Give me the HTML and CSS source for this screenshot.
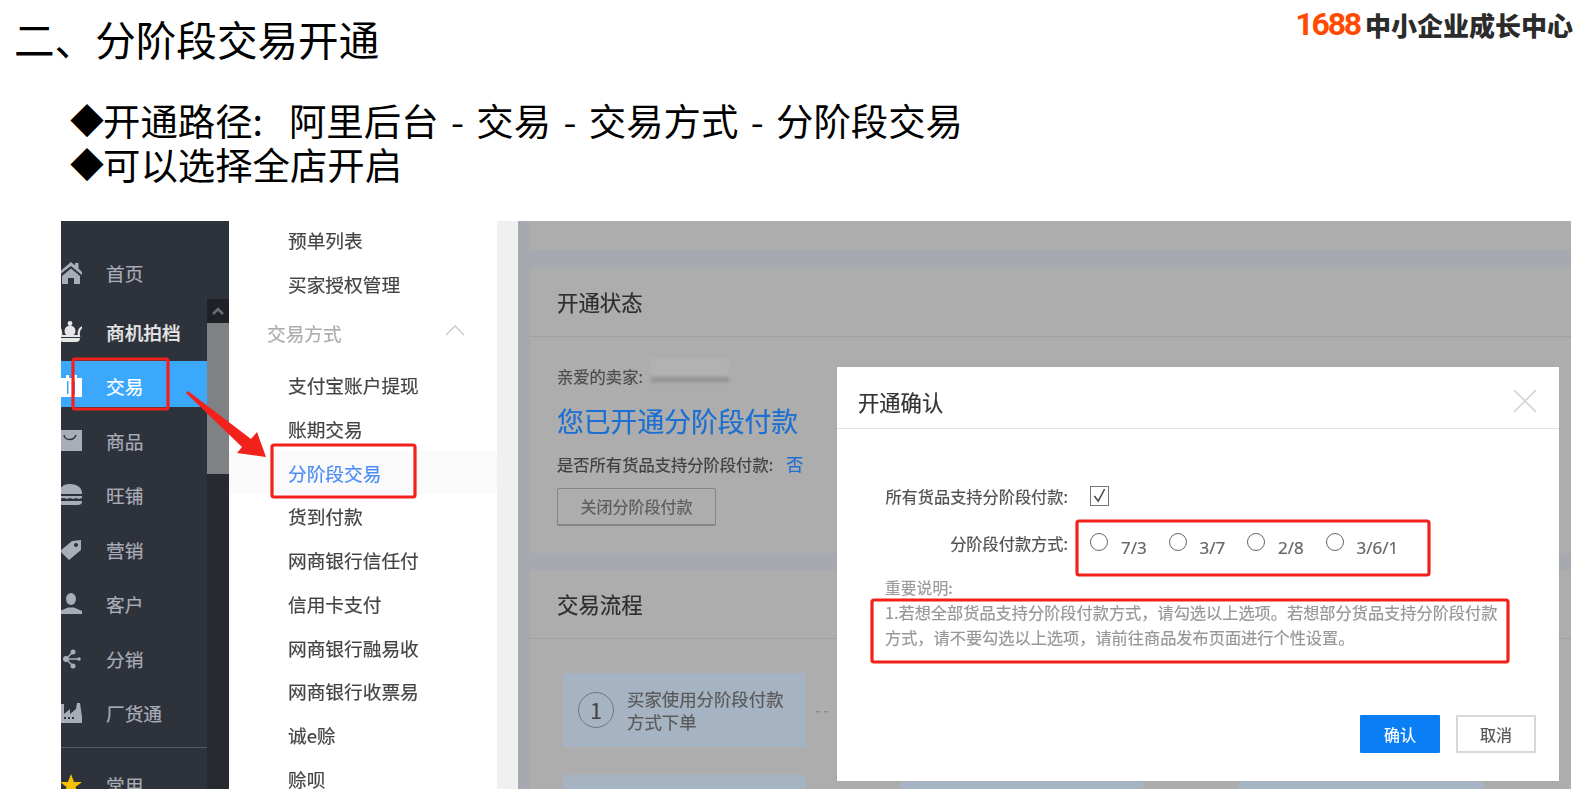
FILE: index.html
```html
<!DOCTYPE html>
<html lang="zh-CN">
<head>
<meta charset="utf-8">
<title>分阶段交易开通</title>
<link rel="stylesheet" href="styles.css">
</head>
<body>
<header class="head">
  <h1 class="title">二、分阶段交易开通</h1>
  <div class="logo"><span class="logo-num">1688</span><span class="logo-text">中小企业成长中心</span></div>
</header>
<ul class="bullets">
  <li><span class="dia">◆</span>开通路径:<span class="gap"></span>阿里后台 - 交易 - 交易方式 - 分阶段交易</li>
  <li><span class="dia">◆</span>可以选择全店开启</li>
</ul>
<section class="shot">
  <div class="screen">
    <nav class="side">
      <ul class="menu">
        <li class="item first"><svg class="ico" viewBox="0 0 21 22"><path d="M-3 11 10 0l4 3.400V1h3.500v5.400L22 11l-1.500 1.700L10 4-1.500 12.700zM1 14l9-7.500L19 14v8h-6v-6H7v6H1z"/></svg>首页</li>
        <li class="item strong"><svg class="ico" viewBox="0 0 21 22"><circle cx="9" cy="2.500" r="2.400"/><path d="M-4 6c3 0 5 4 4 9h18c-1-5 1-9 5-9" fill="none" stroke="currentColor" stroke-width="2.200"/><circle cx="9" cy="10" r="5.500"/><path d="M-2 17h21c0 3-2 4-4 4H2c-2 0-4-1-4-4z"/></svg>商机拍档</li>
        <li class="item active"><svg class="ico" viewBox="0 0 21 22"><path d="M-2 3h23v19H-2zM5 0h3v4H5zM13 0h3v4h-3z"/><path class="cut" d="M6 6h1.500v13H6zM12.500 6H14v13h-1.500z"/></svg>交易</li>
        <li class="item"><svg class="ico" viewBox="0 0 21 22"><path d="M-2 0h23v21H-2z"/><path class="cutline" d="M3 5c1 6 10 6 12 0"/></svg>商品</li>
        <li class="item"><svg class="ico" viewBox="0 0 21 22"><path d="M-2 9C-2 3 3 0 9 0s12 3 12 9v1H-2zM-2 12h23v2l-3 1-3-1-3 1-3-1-3 1-3-1-5 1zM-2 17h23v1c0 2-2 3-4 3H2c-2 0-4-1-4-3z"/></svg>旺铺</li>
        <li class="item"><svg class="ico" viewBox="0 0 21 22"><path d="M-1 12 11 2l9-1v10L8 21zM15 4a2 2 0 1 0 .01 0z" fill-rule="evenodd"/></svg>营销</li>
        <li class="item"><svg class="ico" viewBox="0 0 21 22"><ellipse cx="10" cy="6" rx="5" ry="6"/><path d="M-1 21v-3l8-3.500h6l8 3.500v3z"/></svg>客户</li>
        <li class="item"><svg class="ico" viewBox="0 0 21 22"><circle cx="5" cy="11" r="3"/><circle cx="12" cy="4" r="2.500"/><circle cx="12" cy="18" r="2.500"/><circle cx="18" cy="11" r="1.800"/><path class="line" d="M5 11 12 4M5 11l7 7M5 11h13"/></svg>分销</li>
        <li class="item"><svg class="ico" viewBox="0 0 21 22"><path d="M-2 21V2h5v10l6-5v5l6-5 1-6h3l2 14v6z"/><path class="cut" d="M3 15h2v2H3zM7 15h2v2H7zM11 15h2v2h-2z"/></svg>厂货通</li>
        <li class="item ruled"><svg class="ico gold" viewBox="0 0 21 22"><path d="M10 0l3 8h8l-6.500 5 2.500 8-7-5-7 5 2.500-8L-1 8h8z"/></svg>常用</li>
      </ul>
      <div class="scroll">
        <div class="scroll-btn"><svg class="scroll-up" viewBox="0 0 12 8"><path d="M1 7 6 2l5 5"/></svg></div>
        <div class="scroll-thumb"></div>
      </div>
    </nav>

    <aside class="sub">
      <a class="sub-item">预单列表</a>
      <a class="sub-item">买家授权管理</a>
      <div class="sub-group">交易方式<svg class="chev" viewBox="0 0 20 11"><path d="M1 10 10 1l9 9"/></svg></div>
      <a class="sub-item">支付宝账户提现</a>
      <a class="sub-item">账期交易</a>
      <a class="sub-item current">分阶段交易</a>
      <a class="sub-item">货到付款</a>
      <a class="sub-item">网商银行信任付</a>
      <a class="sub-item">信用卡支付</a>
      <a class="sub-item">网商银行融易收</a>
      <a class="sub-item">网商银行收票易</a>
      <a class="sub-item">诚e赊</a>
      <a class="sub-item">赊呗</a>
    </aside>

    <div class="strip"></div>

    <main class="main">
      <div class="panel top-panel"></div>
      <div class="panel">
        <h2 class="panel-head">开通状态</h2>
        <div class="status">
          <p class="hello">亲爱的卖家:<span class="smudge"></span></p>
          <p class="opened">您已开通分阶段付款</p>
          <p class="ask">是否所有货品支持分阶段付款:<span class="no">否</span></p>
          <button class="close-btn">关闭分阶段付款</button>
        </div>
      </div>
      <div class="panel last">
        <h2 class="panel-head">交易流程</h2>
        <div class="steps">
          <div class="step"><span class="num">1</span><span class="step-text">买家使用分阶段付款<br>方式下单</span></div>
          <span class="dash">- -</span>
          <div class="step"></div>
          <div class="step"></div>
          <div class="step low"></div>
          <div class="step low"></div>
          <div class="step low"></div>
        </div>
      </div>
    </main>

    <div class="modal">
      <div class="modal-head">开通确认<svg class="x" viewBox="0 0 24 24"><path d="M1 1l22 22M23 1 1 23"/></svg></div>
      <div class="modal-body">
        <div class="form-row first-row"><span class="label">所有货品支持分阶段付款:</span><span class="check"><svg viewBox="0 0 20 20"><path d="M4 10l4.500 6L16 2"/></svg></span></div>
        <div class="form-row radio-row"><span class="label">分阶段付款方式:</span>
          <span class="radio"><i></i><b>7/3</b></span>
          <span class="radio"><i></i><b>3/7</b></span>
          <span class="radio"><i></i><b>2/8</b></span>
          <span class="radio"><i></i><b>3/6/1</b></span>
        </div>
        <div class="note-title">重要说明:</div>
        <p class="note">1.若想全部货品支持分阶段付款方式&#65292;请勾选以上选项。若想部分货品支持分阶段付款方式&#65292;请不要勾选以上选项&#65292;请前往商品发布页面进行个性设置。</p>
      </div>
      <div class="modal-foot"><button class="ok">确认</button><button class="cancel">取消</button></div>
    </div>
  </div>

  <svg class="marks" viewBox="0 0 1510 568">
    <rect class="box" x="12" y="138" width="95" height="50" rx="2"/>
    <rect class="box" x="211" y="224" width="143" height="52" rx="2"/>
    <rect class="box" x="1016" y="300" width="352" height="54" rx="2"/>
    <rect class="box" x="811" y="379" width="636" height="62" rx="2"/>
    <path class="arrow" d="M125 172 127 170 190 218 196 211 205 236 176 232 181 226z"/>
  </svg>
</section>
</body>
</html>
```

FILE: styles.css
```css
* { box-sizing: border-box; }
html, body { margin: 0; height: 796px; overflow: hidden; background: #fff; }
body { font-family: "Noto Sans CJK SC", "Noto Sans", sans-serif; color: #000; }
h1, h2, p, ul { margin: 0; padding: 0; font-weight: 400; }
ul { list-style: none; }
button { font: inherit; padding: 0; }

.head { display: flex; justify-content: space-between; align-items: flex-start; height: 98px; padding: 11px 6px 0 14px; }
.title { font-size: 40.600px; line-height: 56px; white-space: nowrap; }
.logo { display: flex; align-items: center; height: 26px; white-space: nowrap; }
.logo-num { font-family: Roboto, sans-serif; font-weight: 700; font-size: 32px; letter-spacing: -2.200px; color: #ff4a00; margin-right: 5px; }
.logo-text { font-weight: 900; font-size: 26px; color: #2b2b2b; }

.bullets { padding-left: 70px; font-size: 37.400px; line-height: 44px; height: 90px; word-spacing: 4px; }
.bullets li { display: flex; white-space: pre; }
.dia { width: 33px; font-size: 34px; }
.gap { width: 26px; }

.shot { position: relative; width: 1510px; height: 568px; margin: 33px 0 0 61px; overflow: hidden; }
.screen { position: relative; display: grid; grid-template-columns: 168px 268px 21px 1fr; height: 568px; filter: blur(.45px); -webkit-text-stroke: .2px; }
.marks { position: absolute; inset: 0; width: 1510px; height: 568px; }
.box { fill: none; stroke: #f3211b; stroke-width: 3.200px; }
.arrow { fill: #f3211b; }

/* left rail */
.side { display: flex; background: #2e323b; color: #a9adb8; overflow: hidden; height: 568px; }
.menu { width: 146px; flex: none; padding-top: 29px; }
.item { display: flex; align-items: center; height: 46px; margin-bottom: 8.500px; font-size: 18.700px; line-height: 46px; white-space: nowrap; }
.item.first { margin-bottom: 12.500px; }
.item.strong { color: #e6e6e6; font-weight: 500; }
.item.active { background: #3ba8fb; color: #fff; margin-top: -2px; margin-bottom: 10.500px; padding-top: 3px; }
.item.ruled { margin-top: 11px; height: 60px; padding-top: 14px; border-top: 1px solid #555a63; }
.ico { width: 21px; height: 22px; margin-right: 24px; fill: currentColor; flex: none; overflow: hidden; }
.gold { fill: #f6c000; }
.cut { fill: #3ba8fb; }
.item:not(.active) .cut { fill: #2e323b; }
.cutline { fill: none; stroke: #2e323b; stroke-width: 1.500px; }
.line { stroke: currentColor; stroke-width: 1.500px; fill: none; }
.scroll { width: 22px; margin-top: 78px; background: #272a31; }
.scroll-btn { height: 24px; background: #1f2126; display: flex; align-items: center; justify-content: center; }
.scroll-up { width: 12px; height: 8px; fill: none; stroke: #6b6e74; stroke-width: 2.500px; }
.scroll-thumb { height: 151px; background: #808184; }

/* sub menu */
.sub { display: flex; flex-direction: column; margin-top: -3px; background: #fff; height: 571px; overflow: hidden; }
.sub-item { display: block; flex: none; height: 43.700px; line-height: 43.700px; padding-left: 59px; font-size: 18.700px; color: #444; white-space: nowrap; }
.sub-item.current { background: #fafafa; color: #4c8df6; }
.sub-group { position: relative; flex: none; height: 58px; line-height: 56px; padding-left: 38px; font-size: 18.700px; color: #adadad; }
.chev { position: absolute; left: 216px; top: 20px; width: 20px; height: 11px; fill: none; stroke: #c8c8c8; stroke-width: 1.300px; }

.strip { background: #f0f0f0; }

/* dimmed page */
.main { display: flex; flex-direction: column; gap: 17.500px; padding-left: 12px; background: #a6a9af; overflow: hidden; height: 568px; }
.panel { flex: none; background: #adadad; height: 285px; }
.top-panel { height: 29px; }
.panel.last { height: 240px; }
.panel-head { height: 69px; line-height: 67px; padding-left: 27px; font-size: 21.400px; color: #2d2d2d; border-bottom: 1px solid #a0a0a0; }
.status { position: relative; padding: 26px 0 0 27px; }
.hello { font-size: 16.300px; line-height: 26px; color: #4c4c4c; height: 26px; display: flex; }
.smudge { width: 78px; height: 28px; margin: -5px 0 0 8px; filter: blur(1.500px); background: linear-gradient(#b2b2b2 60%, #8d8d8d 78%, #adadad 92%); }
.opened { font-size: 26.800px; line-height: 42px; color: #1d6fd1; margin-top: 11px; }
.ask { font-size: 16.300px; line-height: 26px; color: #404040; margin-top: 9px; white-space: nowrap; }
.no { margin-left: 13px; color: #1d6fd1; font-size: 17px; }
.close-btn { display: block; width: 159px; height: 38px; margin-top: 11px; background: #adadad; border: 1px solid #848484; border-bottom-width: 2px; border-radius: 2px; color: #5c5c5c; font-size: 16px; }
.steps { display: grid; grid-template-columns: 243px 94px 243px 243px; row-gap: 28px; padding: 34px 0 0 33px; align-items: start; }
.step { display: flex; align-items: center; height: 74px; background: #a6b3c2; border-radius: 2px; }
.steps .step:nth-child(3), .steps .step:nth-child(4) { visibility: hidden; }
.dash { font-size: 15px; line-height: 74px; color: #8a8a8a; padding-left: 9px; }
.step.low { grid-row: 2; }
.step.low:nth-child(5) { grid-column: 1; }
.step.low:nth-child(6) { grid-column: 3; }
.step.low:nth-child(7) { grid-column: 4; margin-left: 95px; width: 246px; }
.num { width: 36px; height: 36px; margin-left: 15px; border: 1px solid #6f7780; border-radius: 50%; font-size: 21px; line-height: 34px; text-align: center; color: #444; flex: none; }
.step-text { margin-left: 13px; font-size: 17.400px; line-height: 23px; color: #5a5a5a; white-space: nowrap; }

/* dialog */
.modal { position: absolute; left: 776px; top: 146px; width: 722px; height: 414px; display: flex; flex-direction: column; background: #fff; box-shadow: 0 0 1px #999; }
.modal-head { position: relative; flex: none; height: 62px; line-height: 70px; padding-left: 21px; font-size: 21.300px; color: #333; border-bottom: 1px solid #e4e4e4; }
.x { position: absolute; right: 22px; top: 22px; width: 24px; height: 24px; fill: none; stroke: #d0d0d0; stroke-width: 1.500px; }
.modal-body { padding: 55px 48px 0 48px; flex: 1; }
.form-row { display: flex; align-items: center; height: 24px; }
.radio-row { margin-top: 23px; }
.label { width: 183px; flex: none; text-align: right; font-size: 16.200px; color: #505050; white-space: nowrap; }
.check { width: 19px; height: 20px; margin-left: 22px; border: 1.500px solid #777; display: block; }
.check svg { display: block; width: 100%; height: 100%; fill: none; stroke: #444; stroke-width: 1.700px; }
.radio { display: flex; align-items: center; width: 78.500px; flex: none; }
.label + .radio { margin-left: 22px; }
.radio i { width: 18px; height: 18px; border: 1.500px solid #666; border-radius: 50%; margin-top: -2px; flex: none; }
.radio b { margin: 8px 0 0 13px; font-weight: 400; font-size: 17px; color: #666; font-family: "Noto Sans", sans-serif; }
.note-title { margin-top: 21px; font-size: 15.800px; line-height: 24px; color: #9b9b9b; }
.note { font-size: 16.200px; line-height: 25px; color: #979797; width: 618px; }
.modal-foot { display: flex; justify-content: flex-end; gap: 16px; padding: 0 23px 28px 0; }
.ok, .cancel { width: 80px; height: 38px; font-size: 16px; border-radius: 1px; }
.ok { background: #0a7ff5; border: 0; color: #fff; }
.cancel { background: #fff; border: 2px solid #d8d8d8; color: #555; }
```
